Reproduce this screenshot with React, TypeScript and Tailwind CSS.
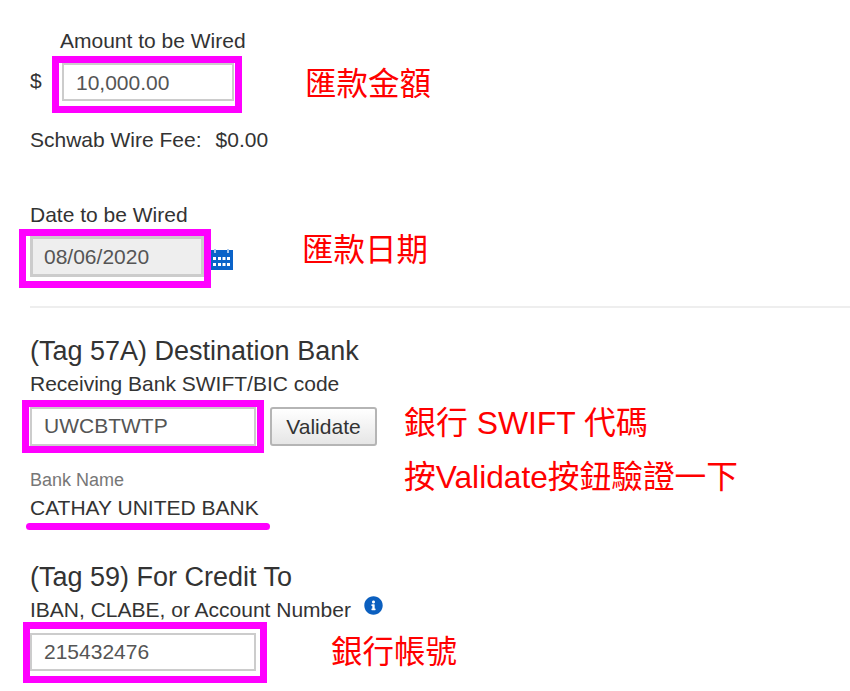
import React from "react";
import { FaInfoCircle } from "react-icons/fa";

function Note({ children, className }: { children: React.ReactNode; className: string }) {
  return (
    <div
      className={
        "absolute whitespace-nowrap leading-[40px] text-[#ff0000] font-['Liberation_Sans','Noto_Sans_CJK_TC',sans-serif] " + className
      }
    >
      {children}
    </div>
  );
}

function Calendar() {
  return (
    <svg width="22" height="21" viewBox="0 0 22 21" className="mt-[20px] shrink-0">
      <rect x="0" y="1" width="22" height="20" fill="#0a63c9" />
      <rect x="3" y="0" width="2" height="4" fill="#a9c8ee" />
      <rect x="16" y="0" width="2" height="4" fill="#a9c8ee" />
      <g fill="#ffffff">
        <rect x="2" y="8" width="3" height="3" />
        <rect x="7" y="8" width="3" height="3" />
        <rect x="11.5" y="8" width="3" height="3" />
        <rect x="16" y="8" width="3" height="3" />
        <rect x="2" y="14" width="3" height="3" />
        <rect x="7" y="14" width="3" height="3" />
        <rect x="11.5" y="14" width="3" height="3" />
        <rect x="16" y="14" width="3" height="3" />
      </g>
    </svg>
  );
}

export default function App() {
  return (
    <div className="relative h-[691px] w-[850px] overflow-hidden bg-white pl-[30px] font-['Liberation_Sans','Noto_Sans_CJK_TC',sans-serif] text-[21px] leading-[26px] text-[#333333]">
      <Note className="left-[305px] top-[64px] text-[31.5px]">匯款金額</Note>
      <Note className="left-[302px] top-[230px] text-[31.5px]">匯款日期</Note>
      <Note className="left-[404px] top-[403px] text-[31.9px]">銀行 SWIFT 代碼</Note>
      <Note className="left-[404px] top-[457px] text-[31.7px]">按Validate按鈕驗證一下</Note>
      <Note className="left-[331px] top-[632px] text-[31.5px]">銀行帳號</Note>

      <div className="pl-[30px] pt-[28px]">Amount to be Wired</div>
      <div className="mt-[2px] flex items-start">
        <span className="mt-[12px] w-[22px]">$</span>
        <div className="h-[57px] w-[190px] border-[7px] border-[#ff00ff] pl-[3px]">
          <div className="h-[38px] w-[172px] border-2 border-[#cccccc] pl-[12px] text-[#555555] leading-[36px]">10,000.00</div>
        </div>
      </div>
      <div className="mt-[14px] flex h-[26px]">
        <span>Schwab Wire Fee:</span>
        <span className="ml-[14px]">$0.00</span>
      </div>

      <div className="mt-[49px]">Date to be Wired</div>
      <div className="-ml-[11px] mt-[1px] flex items-start">
        <div className="h-[59px] w-[192px] border-[7px] border-[#ff00ff] pl-[4px]">
          <div className="h-[41px] w-[174px] border-[3px] border-[#cccccc] bg-[#eeeeee] pl-[11px] text-[#555555] leading-[35px]">08/06/2020</div>
        </div>
        <Calendar />
      </div>
      <div className="mt-[18px] h-[2px] bg-[#eeeeee]" />

      <div className="mt-[26px] text-[27px] leading-[34px]">(Tag 57A) Destination Bank</div>
      <div className="mt-[3px] leading-[26px]">Receiving Bank SWIFT/BIC code</div>
      <div className="-ml-[8px] mt-[3px] flex items-start">
        <div className="h-[53px] w-[242px] border-[7px] border-[#ff00ff] pl-[1px]">
          <div className="h-[39px] w-[226px] border-2 border-[#cccccc] pl-[12px] text-[#555555] leading-[34px]">UWCBTWTP</div>
        </div>
        <button className="ml-[6px] mt-[7px] h-[39px] w-[107px] rounded-[3px] border-2 border-[#b5b5b5] bg-gradient-to-b from-[#ffffff] to-[#e6e6e6] text-center text-[21px] leading-[32px] text-[#333333]">
          Validate
        </button>
      </div>

      <div className="mt-[14px] text-[18px] leading-[26px] text-[#777777]">Bank Name</div>
      <div className="mt-[2px] leading-[26px]">CATHAY UNITED BANK</div>
      <div className="-ml-[4px] mt-[2px] h-[7px] w-[244px] rounded-full bg-[#ff00ff]" />

      <div className="mt-[30px] text-[27px] leading-[34px]">(Tag 59) For Credit To</div>
      <div className="mt-[3px] flex h-[26px]">
        <span>IBAN, CLABE, or Account Number</span>
        <FaInfoCircle className="ml-[13px] mt-[-1px] text-[#0b5fbf]" size={19} />
      </div>
      <div className="-ml-[7px] -mt-[1px] h-[61px] w-[244px] border-[7px] border-[#ff00ff]">
        <div className="mt-[4px] h-[38px] w-[226px] border-2 border-[#cccccc] pl-[12px] text-[#555555] leading-[33px]">215432476</div>
      </div>
    </div>
  );
}
